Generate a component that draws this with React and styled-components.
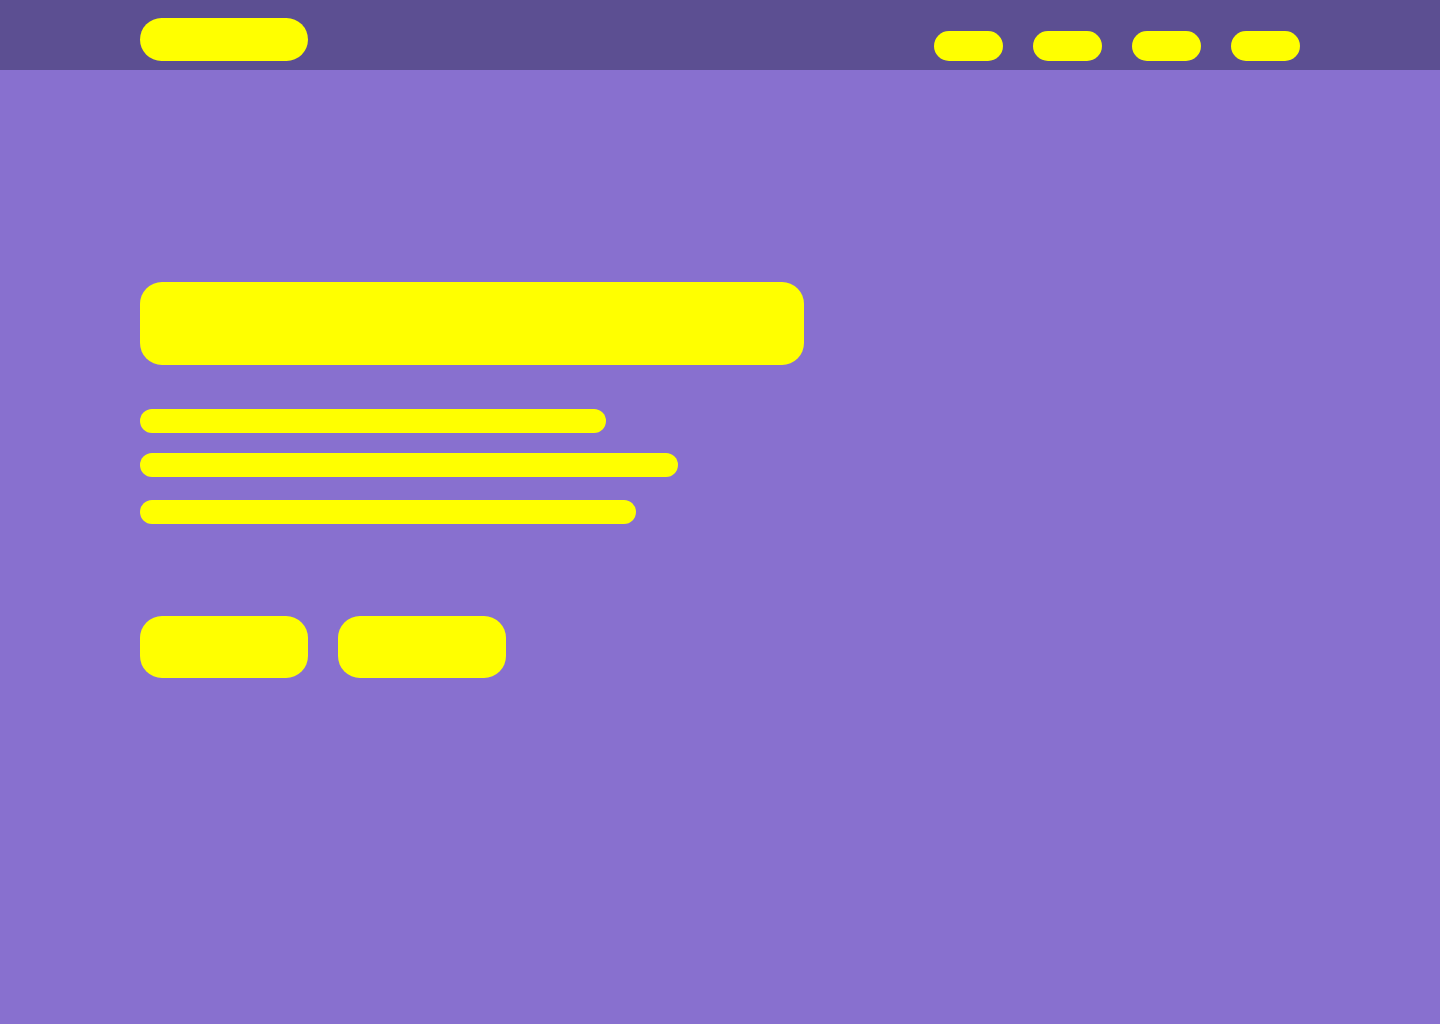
import React from "react";
import styled, { createGlobalStyle } from "styled-components";

const GlobalStyle = createGlobalStyle`
  html, body {
    margin: 0;
    padding: 0;
    background: #8870cf;
    font-family: "Liberation Sans", Arial, sans-serif;
  }
`;

const Page = styled.div`
  min-height: 1024px;
  background: #8870cf;
`;

const Header = styled.header`
  height: 70px;
  box-sizing: border-box;
  padding: 0 140px 9px;
  background: #5c4f92;
  display: flex;
  align-items: flex-end;
  justify-content: space-between;
`;

const Logo = styled.div`
  width: 168px;
  height: 43px;
  border-radius: 22px;
  background: #ffff00;
`;

const Nav = styled.nav`
  display: flex;
  gap: 30px;
`;

const NavItem = styled.div`
  width: 69px;
  height: 30px;
  border-radius: 15px;
  background: #ffff00;
`;

const Hero = styled.main`
  padding: 212px 140px 0;
  display: flex;
  flex-direction: column;
`;

const Headline = styled.div`
  width: 664px;
  height: 83px;
  border-radius: 22px;
  background: #ffff00;
`;

const Lines = styled.div`
  margin-top: 44px;
  display: flex;
  flex-direction: column;
`;

const Line = styled.div`
  width: ${(props) => props.width}px;
  height: 24px;
  margin-top: ${(props) => props.gap || 0}px;
  border-radius: 12px;
  background: #ffff00;
`;

const Actions = styled.div`
  margin-top: 92px;
  display: flex;
  gap: 30px;
`;

const Button = styled.div`
  width: 168px;
  height: 62px;
  border-radius: 22px;
  background: #ffff00;
`;

const App = () => {
  return (
    <Page>
      <GlobalStyle />
      <Header>
        <Logo />
        <Nav>
          <NavItem />
          <NavItem />
          <NavItem />
          <NavItem />
        </Nav>
      </Header>
      <Hero>
        <Headline />
        <Lines>
          <Line width={466} />
          <Line width={538} gap={20} />
          <Line width={496} gap={23} />
        </Lines>
        <Actions>
          <Button />
          <Button />
        </Actions>
      </Hero>
    </Page>
  );
};

export default App;
